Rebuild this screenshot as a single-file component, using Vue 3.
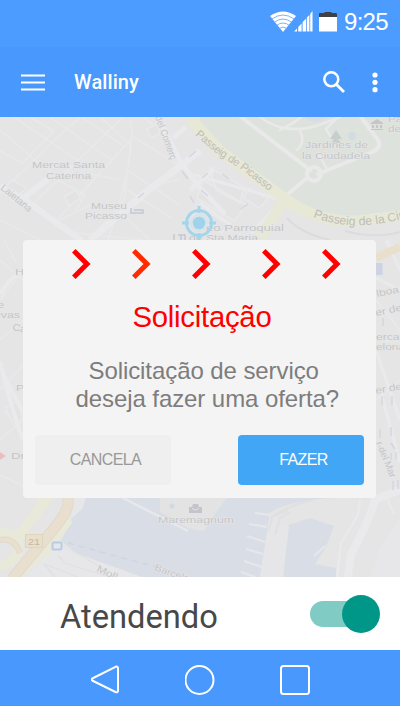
<script setup>
import { ref } from 'vue'

const online = ref(true)
const chevrons = [
  { x: 71, color: '#ff0000' },
  { x: 131, color: '#ff2a00' },
  { x: 191, color: '#ff0000' },
  { x: 261, color: '#ff0000' },
  { x: 321, color: '#ff0000' },
]
const gaps = chevrons.map((c, i) => ({
  color: c.color,
  gap: i ? c.x - chevrons[i - 1].x - 20 : c.x - 23,
}))
const labels = [
  { x: 32, y: 168, w: 73, t: 'Mercat Santa' },
  { x: 46, y: 179, w: 45, t: 'Caterina' },
  { x: 91, y: 208.5, w: 36, t: 'Museu' },
  { x: 85, y: 219, w: 42, t: 'Picasso' },
  { x: 305, y: 148, w: 63, t: 'Jardines de' },
  { x: 302, y: 159, w: 68, t: 'la Ciudadela' },
  { x: 388, y: 122, w: 14, t: 'Pa' },
  { x: 388, y: 132, w: 13, t: 'de' },
  { x: 206, y: 230.5, w: 78, t: 'eo Parroquial' },
  { x: 189, y: 241, w: 69, t: 'de Sta Maria' },
  { x: 158, y: 523, w: 76, t: 'Maremagnum' },
  { x: 15, y: 275, w: 9, t: 'H' },
  { x: -2, y: 308, w: 6, t: 'e' },
  { x: -2, y: 318, w: 22, t: 'ivas' },
  { x: 12, y: 330, w: 14, t: 'Ca', r: 12 },
  { x: 16, y: 391, w: 8, t: 'P' },
  { x: 11, y: 459, w: 14, t: 'Dr' },
  { x: 377, y: 297, w: 23, t: 'lboa', r: -12 },
  { x: 376, y: 316, w: 27, t: 'er de', r: -12 },
  { x: 376, y: 340, w: 27, t: 'ercat' },
  { x: 376, y: 350, w: 29, t: 'elona' },
  { x: 376, y: 394, w: 27, t: 'er de', r: -10 },
  { x: 376, y: 443, w: 38, t: 'r del Mar', r: 68 },
  { x: 0, y: 189, w: 37, t: 'Laietana', r: 39 },
  { x: 155, y: 117, w: 46, t: 'del Comerç', r: 70 },
  { x: 96, y: 571, w: 22, t: 'Moll', r: 25 },
  { x: 154, y: 570, w: 48, t: 'Barcelona', r: 20 },
]
</script>

<template>
  <div class="phone">
    <header class="status">
      <svg class="wifi" viewBox="0 0 26 22" width="26" height="22">
        <path d="M0 5Q13-4 26 5L13 21Z" fill="#fff" />
        <g fill="none" stroke="#6aabff" stroke-width=".9">
          <path d="M2 8Q13 0 24 8M4 11.5Q13 4.5 22 11.5M6.5 14.5Q13 9.5 19.5 14.5M9 17.5Q13 14.5 17 17.5" />
        </g>
      </svg>
      <svg class="signal" viewBox="0 0 19 21" width="19" height="21">
        <path d="M0 20.500L3 17.500V20.500ZM4.200 20.500V16L7.600 12.500V20.500ZM8.600 20.500V11L12 7.800V20.500ZM12.800 20.500V6.500L15.400 4V20.500ZM16.200 20.500V3L18.500 0V20.500Z" fill="#fff" />
      </svg>
      <svg class="battery" viewBox="0 0 18 20" width="18" height="20">
        <path d="M0 5V2Q0 1 1 1H5L6 0H12L13 1H17Q18 1 18 2V5Z" fill="#404145" />
        <path d="M0 5H18V19.500H0Z" fill="#fff" />
      </svg>
      <span class="time">9:25</span>
    </header>

    <nav class="toolbar">
      <svg class="menu" viewBox="0 0 24 17" width="24" height="17">
        <path d="M0 1.500H24M0 8.500H24M0 15.500H24" stroke="#fff" stroke-width="2.200" />
      </svg>
      <h1>Walliny</h1>
      <svg class="search" viewBox="0 0 23 22" width="23" height="22">
        <circle cx="8.300" cy="8.300" r="7" fill="none" stroke="#fff" stroke-width="2.500" />
        <path d="M13 13L21 21" stroke="#fff" stroke-width="2.800" />
      </svg>
      <svg class="more" viewBox="0 0 6 21" width="6" height="21">
        <g fill="#fff"><circle cx="3" cy="3" r="2.600" /><circle cx="3" cy="10.300" r="2.600" /><circle cx="3" cy="17.700" r="2.600" /></g>
      </svg>
    </nav>

    <main class="map-area">
      <svg class="map" viewBox="0 117 400 460" width="400" height="460">
        <rect y="117" width="400" height="460" fill="#e5e5e5" />
        <!-- park -->
        <path d="M205 117H400V221Q345 230 288 198L205 133L190 117Z" fill="#dde2dc" />
        <!-- small streets -->
        <g fill="none" stroke="#e9e9ea" stroke-width="1.500">
          <path d="M0 151L22 163L54 131L30 117M0 130L35 160L58 178M14 117L93 171M50 117L110 159M82 117L122 145M0 193L58 137L80 117M32 205L123 117M54 223L132 138M90 240L124 200L131 141M76 233L143 240M58 180L85 195L76 210M131 120Q134 145 125 180Q121 200 108 240M132 136L200 178M127 170L180 205M122 187L172 218M90 174L120 180M100 117L131 145M110 203L150 240M60 220L90 205M0 220L40 240M145 117L175 150M150 185L180 180" />
          <path d="M0 260L23 280M0 300L23 270M4 240L16 262M0 340L23 320M0 390L23 365M5 410L23 435M0 440L23 420M0 475L23 486M376 300L400 330M380 345L400 335M376 400L400 380M388 240L400 254" />
        </g>
        <g fill="#e3e3e4" stroke="#e9e9eb" stroke-width="1.500">
          <path d="M13 180L26 188L13 201L1 190ZM65 196L76 190L80 198L69 206ZM147 129L157 124L160 133L151 138Z" />
          <path d="M210 168L230 179L244 187L240 203L216 190ZM203 180L246 205L234 221L197 198ZM199 207L228 224L222 233L192 216ZM249 188L268 199L259 208L244 198Z" />
          <path d="M6 408L17 402L23 418L14 424Z" />
        </g>
        <!-- main streets -->
        <g fill="none" stroke="#eaeaed" stroke-width="6" stroke-linejoin="round">
          <path d="M0 186L25 200L82 241M21 200L48 179" />
          <path d="M90 240L145 193L200 151" stroke-width="7" />
          <path d="M158 117L180 161L200 188L225 214M173 138L186 127M190 190L214 169" stroke-width="5" />
          <path d="M195 175L282 200L245 240M200 203L238 230" stroke-width="3" />
          <path d="M0 294L10 280L23 270M0 362Q15 420 23 440M3 374L23 412" stroke-width="4" />
          <path d="M386 240L400 270M376 278L400 290M376 350L400 420M380 390L400 462" stroke-width="3" />
          <path d="M376 499L400 490M377 494Q370 520 351 554L348 577" stroke-width="8" />
        </g>
        <!-- park paths -->
        <g fill="none" stroke="#e9e9e9" stroke-linecap="round" stroke-linejoin="round">
          <path d="M241 117L310 170M318 174L372 152Q382 148 378 140L361 117M307 178L288 194" stroke-width="4" />
          <circle cx="314" cy="174" r="7" stroke-width="4" />
          <path d="M260 117Q286 137 322 124L340 117M338 117L326 129L330 136M327 169L318 153M280 130Q294 123 301 117M300 131Q306 142 297 150" stroke-width="2.500" />
        </g>
        <path d="M304 117Q314 126 326 117Z" fill="#d7dce6" />
        <circle cx="352" cy="136" r="4" fill="#d3dce2" />
        <path d="M336 130L330 139H334L331 143H341L338 139H342Z" fill="#c7cfcd" />
        <!-- avenue -->
        <g fill="none" stroke="#e8e8d6">
          <path d="M190 118L220 151L284 198Q322 226 365 220L400 216" stroke-width="11" stroke-linejoin="round" />
          <path d="M287 196L260 238" stroke-width="11" />
        </g>
        <path d="M186 117H200V136Q188 130 186 117Z" fill="#e8e8d6" />
        <g fill="none" stroke="#dcdcdf" stroke-width="2"><path d="M287 218Q300 233 330 240M345 231Q375 239 400 232" /></g>
        <!-- sea and harbour -->
        <path d="M83 498H200L220 507L245 507L270 514L260 577H106L61 541L72 518Z" fill="#d9dee6" />
        <path d="M252 498H333Q286 501 270 513L222 512L219 498Z" fill="#d9dee6" />
        <path d="M160 498H227L219 508L204 531Q185 530 174 519L160 512Z" fill="#e3e3e4" />
        <path d="M123 498L188 531" stroke="#e7e8e9" stroke-width="2.500" />
        <path d="M288 525L310 518L334 526L325 549L315 564L336 568V577H283Z" fill="#d9dee6" />
        <path d="M270 514L289 526L283 577H260Z" fill="#e6e6e8" />
        <g fill="none" stroke="#e6e7e9" stroke-width="2">
          <path d="M255 513L270 515M249 524L267 527M247 536L265 542M246 549L263 554M244 561L262 567M241 572L255 577M314 556L325 546" />
          <path d="M270 519Q280 508 313 500M268 532L273 516L288 510M275 535L280 518L290 512" stroke="#e0e0e1" />
          <path d="M360 500L358 515L341 543L337 577M387 498L394 514" stroke="#eaeaec" />
        </g>
        <path d="M400 517L379 548L370 577H400Z" fill="#e7e7ea" />
        <path d="M61 548L142 577H26L39 555Z" fill="#e7e7e9" />
        <g fill="none" stroke="#dfe0e2" stroke-width="1.300">
          <path d="M44 564L78 577M44 564L55 577M59 556L64 563L110 577M72 550L105 570M37 561L30 571" />
          <path d="M68 543L160 568" stroke="#ced5e2" stroke-width="1.500" stroke-dasharray="6 5" />
        </g>
        <path d="M71 498H86L82 509L72 518V498Z" fill="#e7e7e9" />
        <!-- ring road -->
        <g fill="none" stroke="#e8e9d8" stroke-linejoin="round">
          <path d="M38 492L44 503L18 537L0 532M17 536Q24 559 0 567M43 498L58 492" stroke-width="10" />
          <path d="M70 520L46 551L18 577" stroke-width="7" />
        </g>
        <circle cx="45" cy="551" r="6" fill="#e8e9d8" />
        <g fill="none" stroke="#dfd7c8" stroke-width="11"><path d="M68 492V506Q64 518 46 538L12 579" /><path d="M0 540Q14 537 20 553" stroke-width="6" /></g>
        <g fill="none" stroke="#e9dfcf" stroke-width="9.500"><path d="M68 492V506Q64 518 46 538L12 579" /><path d="M0 540Q14 537 20 553" stroke-width="4.500" /></g>
        <rect x="25.500" y="534.500" width="17" height="13" fill="#e8dfcc" stroke="#dfd5b9" />
        <rect x="52.500" y="542.500" width="9" height="7" rx="1" fill="#e4e8ee" stroke="#b9cce2" stroke-width="2" />
        <path d="M376 258L400 247" stroke="#e9dfcd" stroke-width="8" />
        <rect x="376" y="263" width="6.500" height="12" fill="#ced2e5" />
        <!-- direction arrows and markers -->
        <g fill="none" stroke="#d3d5e1" stroke-width="1.500">
          <path d="M138 198L144 193M189 157L196 151M182 171L188 179M190 196L194 203M202 178L208 173M222 174L229 179M201 190L208 196M241 209L248 204M383 318V326M382 396V405M392 396V405M380 429V438M391 427V436M391 453V460M396 452V459M393 481V490M398 480V489M379 445L382 452M391 443L395 449" />
        </g>
        <g fill="none" stroke="#c4c8d3" stroke-width="1.500"><path d="M131 208V213H143V210H134M174 234V241M178 235H185V241M181 235V241" /></g>
        <g fill="#c4c6ca"><path d="M371 123L377 119L383 123V124H371ZM372 125H374V128H372ZM376 125H378V128H376ZM380 125H382V128H380ZM371 129H383V130H371Z" /></g>
        <path d="M189 507H192L193 504H198L199 507H202V513H189Z" fill="#c3c4cc" /><path d="M192 508Q195.500 512 199 508" fill="none" stroke="#e5e5e5" />
        <circle cx="172" cy="506" r="2.500" fill="#cfd9e3" />
        <path d="M0 452L6 456L0 460Z" fill="#ecbdbd" />
        <!-- labels -->
        <g class="labels">
          <text
            v-for="(l, i) in labels" :key="i" :x="l.x" :y="l.y" :textLength="l.w" lengthAdjust="spacingAndGlyphs"
            :transform="l.r ? `rotate(${l.r} ${l.x} ${l.y})` : undefined"
          >{{ l.t }}</text>
          <text x="28" y="545" class="shield" textLength="12" lengthAdjust="spacingAndGlyphs">21</text>
        </g>
        <path id="picasso" d="M195 135L216 153L242 170L273 194" fill="none" />
        <path id="ciudadela" d="M313 217Q354 233 405 218L460 200" fill="none" />
        <g class="avenue">
          <text><textPath href="#picasso" textLength="93">Passeig de Picasso</textPath></text>
          <text class="wide"><textPath href="#ciudadela">Passeig de la Ciu</textPath></text>
        </g>
        <!-- current position -->
        <g fill="none" stroke="#a3d6ec" stroke-width="3">
          <circle cx="199" cy="223" r="12.500" />
          <path d="M199 206V213M199 233V240M182 223H189M209 223H216" />
        </g>
        <circle cx="199" cy="223" r="8" fill="none" stroke="#d6e3e9" stroke-width="2" />
        <circle cx="199" cy="223" r="6.300" fill="#9fd3eb" />
      </svg>

      <section class="dialog">
        <div class="chevrons">
          <svg v-for="(c, i) in gaps" :key="i" viewBox="0 0 20 30" width="20" height="30" :style="{ marginLeft: c.gap + 'px' }">
            <path d="M2.800 1.800L16 15L2.800 28.200" fill="none" :stroke="c.color" stroke-width="5" />
          </svg>
        </div>
        <h2>Solicitação</h2>
        <p><span class="first">Solicitação de serviço</span><span class="second">deseja fazer uma oferta?</span></p>
        <div class="actions">
          <button class="cancel">CANCELA</button>
          <button class="confirm">FAZER</button>
        </div>
      </section>
    </main>

    <section class="availability">
      <span class="state">Atendendo</span>
      <button class="switch" role="switch" :aria-checked="online" @click="online = !online">
        <svg viewBox="0 0 70 38" width="70" height="38">
          <rect y="6" width="62" height="26" rx="13" fill="#80cbc4" />
          <circle :cx="online ? 51 : 19" cy="19" r="19" fill="#009688" />
        </svg>
      </button>
    </section>

    <footer class="navbar">
      <svg viewBox="0 0 30 30" width="30" height="30"><path d="M1.200 13.500L24.500 1.800Q27 .8 27 3.500V25.500Q27 28.200 24.500 27L1.200 15.500Q-.5 14.500 1.200 13.500Z" /></svg>
      <svg viewBox="0 0 32 30" width="32" height="30"><circle cx="14.500" cy="15" r="14" /></svg>
      <svg viewBox="0 0 30 30" width="30" height="30"><rect x="1" y="1" width="28" height="28" rx="2.500" /></svg>
    </footer>
  </div>
</template>

<style>
body { margin: 0; background: #fff; }
</style>

<style scoped>
.phone { width: 400px; height: 706px; display: flex; flex-direction: column; overflow: hidden; font-family: "Liberation Sans", Arial, sans-serif; }
svg { display: block; flex: none; }
button { border: 0; padding: 0; font: inherit; }
.status { height: 47px; background: #4c9bff; display: flex; box-sizing: border-box; padding: 11px 0 0 270px; color: #fff; }
.signal { margin-left: -2px; }
.battery { margin: 1px 0 0 6px; }
.time { margin: -3px 0 0 7px; font-size: 24px; line-height: 28px; letter-spacing: -0.7px; }
.toolbar { height: 70px; background: #4898fe; display: flex; align-items: flex-start; color: #fff; }
.menu { margin: 27px 0 0 21px; }
h1 { margin: 23px 0 0 29px; width: 248px; font: 500 20px/25px Roboto, sans-serif; letter-spacing: 0.1px; }
.search { margin: 24px 0 0 1px; }
.more { margin: 25px 0 0 26px; }
.map-area { height: 460px; display: grid; }
.map { grid-area: 1 / 1; }
.labels text { font-size: 9.800px; fill: #c4c5c7; stroke: #e8e8e8; stroke-width: 1px; paint-order: stroke; }
.labels .shield { fill: #c2baa3; stroke: none; }
.avenue text { font-size: 11px; fill: #bebeb9; }
.avenue .wide { font-size: 12.200px; }
.dialog { grid-area: 1 / 1; z-index: 1; margin: 123px 0 0 23px; width: 353px; height: 258px; border-radius: 4px; background: #f4f4f4; display: flex; flex-direction: column; }
.chevrons { display: flex; height: 30px; padding-top: 9px; }
h2 { margin: 21px 0 0 109.500px; color: #f00; font-weight: 400; font-size: 29.300px; line-height: 34px; letter-spacing: -0.250px; white-space: nowrap; }
p { margin: 23px 0 0; display: flex; flex-direction: column; color: #7d7d7d; font-size: 24px; line-height: 28px; letter-spacing: -0.080px; white-space: nowrap; }
.first { padding-left: 65.500px; }
.second { padding-left: 52.500px; }
.actions { display: flex; justify-content: space-between; margin: 22px 12px 0; }
.actions button { height: 50px; border-radius: 4px; font-size: 16px; letter-spacing: -0.6px; }
.actions .cancel { width: 136px; padding-left: 5px; background: #efefef; color: #989898; }
.actions .confirm { width: 126px; padding-left: 5px; background: #40a6f5; color: #fff; }
.availability { height: 73px; background: #fff; display: flex; align-items: flex-start; justify-content: space-between; padding: 0 20px 0 60px; }
.state { margin-top: 19px; font: 400 34px/40px Roboto, sans-serif; color: #484848; transform: scaleX(0.96); transform-origin: left; }
.switch { margin-top: 18px; background: none; }
.navbar { height: 56px; box-sizing: border-box; padding: 15px 90px 0 91px; display: flex; justify-content: space-between; background: #4898fe; }
.navbar svg { fill: none; stroke: #fff; stroke-width: 2; }
</style>
